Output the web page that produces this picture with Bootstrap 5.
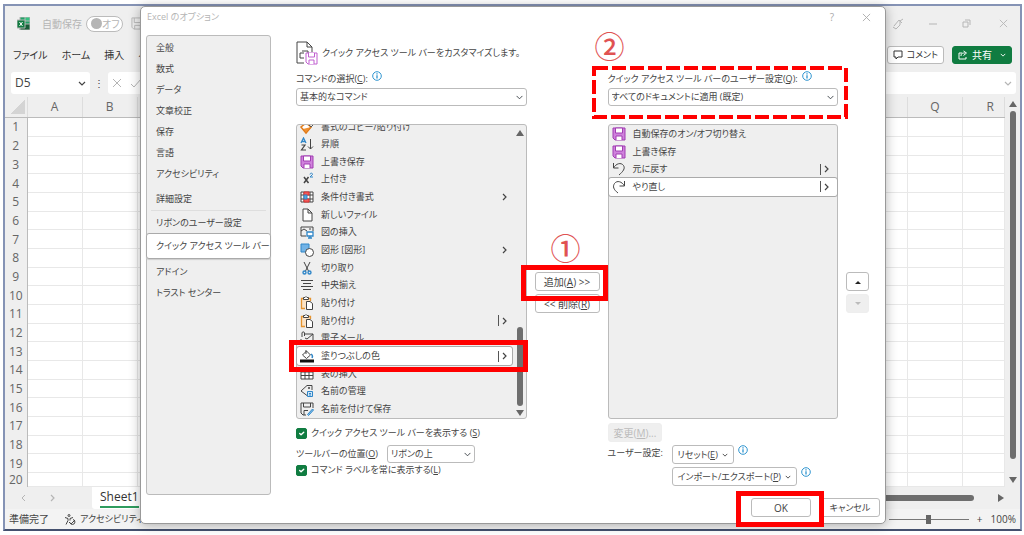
<!DOCTYPE html>
<html lang="ja">
<head>
<meta charset="utf-8">
<meta name="viewport" content="width=device-width, initial-scale=1">
<title>Excel のオプション</title>
<link href="https://cdn.jsdelivr.net/npm/bootstrap@5.3.0/dist/css/bootstrap.min.css" rel="stylesheet">
<style>
body{font-family:"Open Sans","Noto Sans CJK JP",sans-serif;font-feature-settings:"palt";font-size:10px;line-height:16px;color:#444;background:#fff;min-height:100vh;padding:4px 2px 4px 3px;overflow:hidden}
svg{display:block;flex:none;fill:none;stroke:currentColor}
button,select,input{font-feature-settings:inherit}
.app{flex:1;border:2px solid #8593b5;border-bottom-color:#44506e;background:#efefef;min-width:0}
.faded{color:#b5b5b5}
.toggle-pill{width:37px;height:16px;border:1px solid #bbb;border-radius:8px;background:#fff;white-space:nowrap;line-height:14px}
.toggle-pill i{width:11px;height:11px;border-radius:50%;background:#b5b5b5;flex:none}
.title-row{height:35px}
.tab-row{height:28px;gap:14px}
.tab-row a{color:#333;text-decoration:none;white-space:nowrap}
.cmd-btn{height:18px;border:1px solid #bbb;border-radius:3px;background:#fff;color:#333;font-size:10px;line-height:14px;padding:0 5px;white-space:nowrap}
.share-btn{background:#107c41;border-color:#107c41;color:#fff}
.formula-row{height:28px;padding:0 4px 0 6px}
.field-box{background:#fff;border-radius:3px;height:22px;font-size:12px}
.sheet-wrap{flex:1;min-height:0}
.sheet-clip{flex:1;min-width:0;overflow:hidden}
.sheet-table{table-layout:fixed;width:100%;height:100%;border-collapse:collapse;background:#fff;font-size:12px;line-height:13px}
.sheet-table th{background:#efefef;font-weight:400;text-align:center;color:#666;padding:0;border-right:1px solid #ddd}
.sheet-table td{border:1px solid #e8e8e8;padding:0}
.sheet-table thead th{height:20px;border-bottom:1px solid #bbb}
.sheet-table thead th:last-child{width:42px;text-align:right;padding-right:10px}
.sheet-table tbody th{border-right:1px solid #bbb}
.vbar{width:15px}
.corner{display:block;margin:0 2px 0 auto;width:15px;height:14px;background:linear-gradient(135deg,transparent 50%,#d4d4d4 50%)}
.thumb{background:#6e6e6e;border-radius:3px}
.tri-up,.tri-down,.tri-right{width:0;height:0;border:4px solid transparent}
.tri-up{border-top:0;border-bottom:6px solid #666}
.tri-down{border-bottom:0;border-top:6px solid #666}
.tri-right{border-right:0;border-left:6px solid #666}
.sheetbar{height:22px}
.sheet-tab{background:#fff;font-size:12px;padding:0 8px;height:22px;border-radius:0 0 3px 3px;color:#333;border:0;margin-left:37px}
.sheet-tab span{display:block;border-bottom:2px solid #2f9c5e;line-height:18px}
.statusbar{height:20px;background:#f3f3f3}
.zoom-range{width:80px;height:10px;appearance:none;background:linear-gradient(#777,#777) center/100% 1px no-repeat}
.zoom-range::-webkit-slider-thumb{appearance:none;width:5px;height:9px;background:#666}
.dialog,.dialog .dd,.fine{font-size:9px}
.dialog{left:135px;right:134px;top:0;bottom:5px;background:#fff;border:1px solid #999;border-radius:5px;box-shadow:0 1px 12px rgba(0,0,0,.3)}
.dialog-title{height:28px;padding:2px 14px 0 6px}
.plain-btn{border:0;background:none;padding:0;color:#aaa;font-size:10px}
.side{width:125px;margin-left:5px;padding-top:1px;background:#efefef;border:1px solid #bbb;border-radius:3px}
.side a{display:block;color:#444;text-decoration:none;padding:0 9px;line-height:21px;height:21px;white-space:nowrap}
.side a.picked{background:#fff;border:1px solid #aaa;border-radius:3px;height:26px;line-height:24px;margin:0 -1px 2px;box-shadow:0 1px 1px #ccc}
.side hr{margin:1px 4px;border-color:#aaa}
.main{padding:0 16px 0 25px}
.heading-row{height:36px;gap:4px}
.mid{width:81px}
.ends{width:31px;padding-left:8px}
.stack{gap:3px;padding-top:201px}
.lab{height:17px;white-space:nowrap}
.dd{height:18px;min-height:0;padding:0 16px 0 3px;line-height:16px;border:1px solid #bbb;border-radius:3px;color:#444;background-color:#fff;background-size:7px;background-position:right 3px center}
.dd-small{width:88px}
.cmds{display:grid;grid-template-rows:10px repeat(16,minmax(0,1fr));flex:1;min-height:0;margin:18px 0 0;padding:0;list-style:none;background:#efefef;border:1px solid #bbb;border-radius:3px;position:relative}
.cmds.later{grid-template-rows:repeat(16,minmax(0,1fr)) 10px}
.cmds li{display:flex;align-items:center;gap:7px;padding:0 8px 0 3px;white-space:nowrap}
.cmds li.cut{overflow:hidden;align-items:flex-end}
.cmds.scrolls li{margin-right:14px;padding-right:5px}
.cmds li.on{background:#fff;outline:1px solid #aaa;border-radius:2px;position:relative}
.more{margin-left:auto;display:flex;align-items:center;gap:3px}
.more.split::before{content:"";width:1px;height:11px;background:#555}
.list-bar{position:absolute;right:3px;top:4px;bottom:3px;width:8px}
.list-bar .thumb{width:6px;height:79px}
.below{height:76px;padding-top:4px}
.opt{height:16px;gap:4px;margin-top:2px;white-space:nowrap}
.opt-mid{gap:9px;margin:5px 0 0}
.opt-end{margin-top:0}
.chk{width:11px;height:11px;margin:0;border-radius:2px!important;flex:none}
.chk:checked{background-color:#107c41;border-color:#107c41}
.btn-s{height:19px;border:1px solid #bbb;border-radius:3px;background:#fff;color:#444;font-size:10px;line-height:16px;padding:0 5px;white-space:nowrap}
.btn-s.fine{font-size:9px}
.btn-s:disabled{background:#efefef;border-color:#eee;color:#bbb}
.wide{width:65px}
.usual{width:60px}
.arrow-btn{width:23px;padding:0}
.info{color:#2f95d0}
.user-lab{width:64px}
.foot{height:28px;padding:3px 5px 0 0;gap:9px}
.ring{position:absolute;border:5px solid #f00;pointer-events:none;z-index:3}
.ring-row{inset:-7px -16px -7px -8px}
.ring-add{inset:-7px -8px -10px -14px}
.ring-ok{inset:-7px -13px -10px -15px}
.dash-box{position:absolute;left:-16px;top:-5px;width:calc(100% + 27px);height:53px;pointer-events:none;overflow:visible}
.num{position:absolute;color:#e05252;font-family:"Noto Sans CJK JP",sans-serif;font-size:30px;line-height:30px;font-weight:500}
.num-one{left:16px;top:-40px}
.num-two{left:-13px;top:-41px}
</style>
</head>
<body class="d-flex">
<svg width="0" height="0" class="position-absolute">
<symbol id="save" viewBox="0 0 14 14"><path d="M1 1h12v12H3l-2-2z" fill="#cf82dc" stroke="#a13db2"/><path d="M3.500 1v5h7V1z" fill="#fff" stroke="#a13db2"/><path d="M4 13V9h6v4" fill="#fff" stroke="#a13db2"/></symbol>
<symbol id="brush" viewBox="0 0 14 14"><path d="M1 6l5-4 5 4-5 6z" fill="#fff" stroke="#e07b1a" stroke-width="1.500"/><path d="M3 8l3 4 5-6" fill="#f09030" stroke="#e07b1a"/><path d="M8 3l3 3 2-2" stroke="#555"/></symbol>
<symbol id="sort" viewBox="0 0 14 14"><path d="M1 6l2.500-5L6 6M2 4.500h3" stroke="#2f86c8" stroke-width="1.300"/><path d="M1.500 8H5l-3.500 5H6" stroke-width="1.200"/><path d="M10.500 2v10M8 9.500l2.500 2.500L13 9.500"/></symbol>
<symbol id="sup" viewBox="0 0 14 14"><path d="M4 5l4.500 6M8.500 5L4 11" stroke-width="1.500"/><path d="M10 2.500c0-2 3-1.500 2.500 0L10 5h3" stroke="#2f86c8"/></symbol>
<symbol id="cond" viewBox="0 0 14 14"><path d="M1 2h12v10H1z" fill="#fff"/><path d="M1 5h12M1 9h12M4 2v10M10 2v10"/><path d="M4 2h5v3H4zM4 9h5v3H4z" fill="#f25c5c" stroke="#d33"/><path d="M4 5h3v4H4z" fill="#5ba6e0" stroke="#2f86c8"/></symbol>
<symbol id="page" viewBox="0 0 14 14"><path d="M3 1h5l4 4v8H3zM8 1v4h4" fill="#fff"/></symbol>
<symbol id="pic" viewBox="0 0 14 14"><path d="M6 11H1V2h12v4M1 6l3-2 3 2M9 4h2"/><path d="M7 7h6v4H7zM10 11v2M8 13h4" fill="#fff" stroke="#2f86c8" stroke-width="1.300"/></symbol>
<symbol id="shape" viewBox="0 0 14 14"><path d="M1 1h8v8H1z" fill="#72b3e6" stroke="#2f86c8"/><circle cx="9.500" cy="9.500" r="4" fill="#fff"/></symbol>
<symbol id="cutting" viewBox="0 0 14 14"><path d="M4 1l4.500 9M10 1L5.500 10"/><circle cx="4.500" cy="11.500" r="1.500" stroke="#2f86c8" stroke-width="1.400"/><circle cx="9.500" cy="11.500" r="1.500" stroke="#2f86c8" stroke-width="1.400"/></symbol>
<symbol id="center" viewBox="0 0 14 14"><path d="M1 2.500h12M3 5.500h8M1 8.500h12M3 11.500h8"/></symbol>
<symbol id="paste" viewBox="0 0 14 14"><path d="M5 12.500H1.500v-10h9V5" fill="#fbe3c6" stroke="#e6942f" stroke-width="1.300"/><path d="M3.500 3.500v-2h1.500l1-1 1 1h1.500v2z" fill="#fff"/><path d="M6.500 5.500H10l2.500 2v6h-6z" fill="#fff"/></symbol>
<symbol id="mail" viewBox="0 0 14 14"><path d="M5 3h8v9H1V8M13 3L7 8 5 7"/><path d="M2 6V2c0-1.500 2.500-1.500 2.500 0v3"/></symbol>
<symbol id="fillc" viewBox="0 0 14 14"><path d="M2.500 6l4-4 4 4-4 3.500zM6 1v4" fill="#fff"/><path d="M11 5c1.500 1 1.500 3 1 4" stroke="#2f86c8" stroke-width="1.500"/><path d="M0 12h14" stroke="#111" stroke-width="3"/></symbol>
<symbol id="grid" viewBox="0 0 14 14"><path d="M1 2h12v10H1zM1 5h12M1 8.500h12M5 2v10M9 2v10M1 3.500h12" fill="#fff"/></symbol>
<symbol id="tagn" viewBox="0 0 14 14"><path d="M7 11.500L1 7l6-5.500h5V6"/><circle cx="9" cy="4" r=".7"/><path d="M7.500 7.500h5v5h-5zM9 9.500h2M9 11h2" fill="#cfe6f8" stroke="#2f86c8"/></symbol>
<symbol id="saveas" viewBox="0 0 14 14"><path d="M6 13H3l-2-2V1h12v5M3.500 1v4h7V1M4 13V8.500h4"/><path d="M7.500 12.500L12.500 7l1 1-5 5.500z" fill="#8ac6ef" stroke="#2f86c8"/></symbol>
<symbol id="undo" viewBox="0 0 14 14"><path d="M1.500 1v5h5M1.500 6C4 1.500 9 0 11.500 3.500c2 3-.500 6-4.500 9.500"/></symbol>
<symbol id="redo" viewBox="0 0 14 14"><path d="M12.500 1v5h-5M12.500 6C10 1.500 5 0 2.500 3.500c-2 3-1 6 3.500 9.500"/></symbol>
<symbol id="chev" viewBox="0 0 5 8"><path d="M1 1l3 3-3 3" stroke-width="1.200"/></symbol>
<symbol id="down" viewBox="0 0 8 5"><path d="M1 1l3 3 3-3" stroke-width="1.200"/></symbol>
<symbol id="cross" viewBox="0 0 10 10"><path d="M1 1l8 8M9 1L1 9"/></symbol>
<symbol id="inf" viewBox="0 0 10 10"><circle cx="5" cy="5" r="4.300"/><path d="M5 4.300v3.200M5 2.300v1.200" stroke-width="1.300"/></symbol>
</svg>

<div class="app d-flex flex-column position-relative">
  <header class="title-row d-flex align-items-center faded ps-2">
    <svg class="ms-1" width="13" height="13" viewBox="0 0 13 13" stroke="none"><path d="M3 0h10v13H3z" fill="#21a366"/><path d="M8 0h5v4H8z" fill="#33c481"/><path d="M3 7h10v6H3z" fill="#185c37"/><path d="M0 3h8v8H0z" fill="#107c41"/><path d="M2.500 5l3 4M5.500 5l-3 4" stroke="#fff"/></svg>
    <span class="ms-2 ps-1 me-1">自動保存</span>
    <span class="toggle-pill d-flex align-items-center justify-content-between ps-1 pe-1"><i></i><span>オフ</span></span>
    <svg class="ms-2" width="13" height="13" viewBox="0 0 14 14"><path d="M1 1h12v12H3l-2-2zM3.500 1v5h7V1M4 13V9h6v4"/></svg>
    <span class="ms-auto d-flex align-items-center me-2 pe-1">
      <svg width="12" height="12" viewBox="0 0 12 12"><path d="M1 9l3 2 4-4V3l3-2M2 8l5-6 3 3"/></svg>
      <svg class="ms-4" width="10" height="10" viewBox="0 0 10 10"><path d="M1 5h8"/></svg>
      <svg class="ms-4 me-4" width="9" height="9" viewBox="0 0 9 9"><path d="M1 3h5v5H1zM3 1h5v5"/></svg>
      <svg class="ms-1" width="9" height="9"><use href="#cross"/></svg>
    </span>
  </header>
  <nav class="tab-row d-flex align-items-center ps-2 pe-2">
    <a href="#">ファイル</a><a href="#">ホーム</a><a href="#">挿入</a><a href="#">ページ レイアウト</a>
    <span class="ms-auto d-flex gap-2">
    <button class="cmd-btn fine d-flex align-items-center gap-1"><svg width="10" height="10" viewBox="0 0 10 10"><path d="M1 1h8v6H5L3 9V7H1z"/></svg>コメント</button>
    <button class="cmd-btn share-btn d-flex align-items-center gap-1"><svg width="10" height="10" viewBox="0 0 10 10"><path d="M4 3H1v6h7V7M3 6c0-3 2-3 4-3M5.500 1l3 2-3 2.500"/></svg>共有<svg class="ms-1" width="6" height="4"><use href="#down"/></svg></button>
    </span>
  </nav>
  <div class="formula-row d-flex align-items-center">
    <div class="field-box d-flex align-items-center justify-content-between px-1" style="width:79px">D5<svg width="8" height="5"><use href="#down"/></svg></div>
    <span class="px-1">⋮</span>
    <div class="field-box flex-grow-1 d-flex align-items-center justify-content-between px-1 faded"><span class="d-flex gap-2"><svg width="10" height="10"><use href="#cross"/></svg><svg width="12" height="10" viewBox="0 0 12 10"><path d="M1 6l3 3 7-8"/></svg></span><svg width="8" height="5"><use href="#down"/></svg></div>
  </div>
  <div class="sheet-wrap d-flex">
    <div class="sheet-clip"><table class="sheet-table"><thead></thead><tbody></tbody></table></div>
    <div class="vbar d-flex flex-column align-items-center pt-1 pb-1"><i class="tri-up"></i><i class="thumb mt-1" style="width:6px;height:91%"></i><i class="tri-down mt-auto"></i></div>
  </div>
  <div class="sheetbar d-flex align-items-center">
    <svg class="faded ms-3" width="5" height="8" viewBox="0 0 5 8"><path d="M4 1L1 4l3 3"/></svg>
    <svg class="faded ms-4" width="5" height="8"><use href="#chev"/></svg>
    <button class="sheet-tab"><span>Sheet1</span></button>
    <i class="thumb ms-auto" style="width:30%;height:6px"></i><i class="tri-right ms-4 me-3"></i>
  </div>
  <footer class="statusbar d-flex align-items-center ps-1">
    <span>準備完了</span>
    <svg class="ms-3 me-1" width="11" height="11" viewBox="0 0 11 11"><circle cx="4" cy="1.500" r="1"/><path d="M0 3.500l3 1v2l-2 4M8 3.500l-3 1v2M8 5.500a2.500 2.500 0 1 1-3 3M4 8l2 2 4-4"/></svg>
    <span class="fine">アクセシビリティ: 問題ありません</span>
    <input class="zoom-range ms-auto" type="range" aria-label="ズーム"><span class="mx-2">+</span><span class="me-1">100%</span>
  </footer>

  <section class="dialog position-absolute d-flex flex-column">
    <div class="dialog-title d-flex align-items-start faded"><span>Excel のオプション</span><button class="plain-btn ms-auto me-4">?</button><button class="plain-btn ms-1 mt-1" aria-label="閉じる"><svg width="9" height="9"><use href="#cross"/></svg></button></div>
    <div class="d-flex flex-grow-1" style="min-height:0">
      <nav class="side">
        <a href="#">全般</a><a href="#">数式</a><a href="#">データ</a><a href="#">文章校正</a><a href="#">保存</a><a href="#">言語</a><a href="#">アクセシビリティ</a><a href="#" class="mt-1">詳細設定</a><hr>
        <a href="#">リボンのユーザー設定</a><a href="#" class="picked">クイック アクセス ツール バー</a><a href="#">アドイン</a><a href="#">トラスト センター</a>
      </nav>
      <div class="main flex-grow-1 d-flex flex-column">
        <div class="heading-row d-flex align-items-center">
          <svg width="22" height="24" viewBox="0 0 22 24"><path d="M8 22H1V1h10l5 5v5M11 1v5h5M4 17v-5h4M6 10h6v3M4 17h4"/><g stroke="#c05fd0" fill="#fff"><path d="M10 12h11v11H12l-2-2z"/><path d="M12.500 12v4h6v-4M13 23v-4h5v4"/></g></svg>
          <span>クイック アクセス ツール バーをカスタマイズします。</span>
        </div>
        <div class="d-flex flex-grow-1" style="min-height:0">
          <div class="d-flex flex-column" style="flex:1 1 0;min-width:0">
            <label class="lab d-flex" for="src"><span>コマンドの選択(<u>C</u>):</span><svg class="info ms-1" width="10" height="10"><use href="#inf"/></svg></label>
            <select id="src" class="form-select dd"><option>基本的なコマンド</option></select>
            <div class="d-flex flex-column flex-grow-1 position-relative" style="min-height:0">
            <ul class="cmds scrolls">
              <li class="cut"><svg width="14" height="14"><use href="#brush"/></svg>書式のコピー/貼り付け</li>
              <li><svg width="14" height="14"><use href="#sort"/></svg>昇順</li>
              <li><svg width="14" height="14"><use href="#save"/></svg>上書き保存</li>
              <li><svg width="14" height="14"><use href="#sup"/></svg>上付き</li>
              <li><svg width="14" height="14"><use href="#cond"/></svg>条件付き書式<span class="more"><svg width="5" height="8"><use href="#chev"/></svg></span></li>
              <li><svg width="14" height="14"><use href="#page"/></svg>新しいファイル</li>
              <li><svg width="14" height="14"><use href="#pic"/></svg>図の挿入</li>
              <li><svg width="14" height="14"><use href="#shape"/></svg>図形 [図形]<span class="more"><svg width="5" height="8"><use href="#chev"/></svg></span></li>
              <li><svg width="14" height="14"><use href="#cutting"/></svg>切り取り</li>
              <li><svg width="14" height="14"><use href="#center"/></svg>中央揃え</li>
              <li><svg width="14" height="14"><use href="#paste"/></svg>貼り付け</li>
              <li><svg width="14" height="14"><use href="#paste"/></svg>貼り付け<span class="more split"><svg width="5" height="8"><use href="#chev"/></svg></span></li>
              <li><svg width="14" height="14"><use href="#mail"/></svg>電子メール</li>
              <li class="on"><svg width="14" height="14"><use href="#fillc"/></svg>塗りつぶしの色<span class="more split"><svg width="5" height="8"><use href="#chev"/></svg></span><i class="ring ring-row"></i></li>
              <li><svg width="14" height="14"><use href="#grid"/></svg>表の挿入</li>
              <li><svg width="14" height="14"><use href="#tagn"/></svg>名前の管理</li>
              <li><svg width="14" height="14"><use href="#saveas"/></svg>名前を付けて保存</li>
            </ul>
            <div class="list-bar d-flex flex-column align-items-center mt-3 pt-1"><i class="tri-up"></i><i class="thumb mt-auto"></i><i class="tri-down mt-1"></i></div>
            </div>
            <div class="below">
              <label class="opt d-flex align-items-center"><input type="checkbox" class="form-check-input chk" checked><span>クイック アクセス ツール バーを表示する (<u>S</u>)</span></label>
              <div class="opt opt-mid d-flex align-items-center"><label for="pos">ツールバーの位置(<u>O</u>)</label><select id="pos" class="form-select dd dd-small"><option>リボンの上</option></select></div>
              <label class="opt opt-end d-flex align-items-center"><input type="checkbox" class="form-check-input chk" checked><span>コマンド ラベルを常に表示する(<u>L</u>)</span></label>
            </div>
          </div>
          <div class="mid stack d-flex flex-column align-items-center">
            <div class="position-relative d-flex"><button class="btn-s wide">追加(<u>A</u>) &gt;&gt;</button><i class="ring ring-add"></i><span class="num num-one">①</span></div>
            <button class="btn-s wide">&lt;&lt; 削除(<u>R</u>)</button>
          </div>
          <div class="d-flex flex-column position-relative" style="flex:1 1 0;min-width:0">
            <svg class="dash-box"><rect x="2" y="2" width="252" height="49" stroke="#f00" stroke-width="4" stroke-dasharray="14 4"/></svg>
            <span class="num num-two">②</span>
            <label class="lab d-flex" for="tgt"><span>クイック アクセス ツール バーのユーザー設定(<u>Q</u>):</span><svg class="info ms-1" width="10" height="10"><use href="#inf"/></svg></label>
            <select id="tgt" class="form-select dd"><option>すべてのドキュメントに適用 (既定)</option></select>
            <ul class="cmds later">
              <li><svg width="14" height="14"><use href="#save"/></svg>自動保存のオン/オフ切り替え</li>
              <li><svg width="14" height="14"><use href="#save"/></svg>上書き保存</li>
              <li><svg width="14" height="14"><use href="#undo"/></svg>元に戻す<span class="more split"><svg width="5" height="8"><use href="#chev"/></svg></span></li>
              <li class="on"><svg width="14" height="14"><use href="#redo"/></svg>やり直し<span class="more split"><svg width="5" height="8"><use href="#chev"/></svg></span></li>
            </ul>
            <div class="below d-flex flex-column align-items-start">
              <button class="btn-s" disabled>変更(<u>M</u>)...</button>
              <div class="d-flex" style="margin-top:3px"><span class="user-lab">ユーザー設定:</span>
                <div>
                  <div class="d-flex"><button class="btn-s fine d-flex align-items-center gap-1"><span>リセット(<u>E</u>)</span><svg width="6" height="4"><use href="#down"/></svg></button><svg class="info ms-1" width="10" height="10"><use href="#inf"/></svg></div>
                  <div class="d-flex" style="margin-top:3px"><button class="btn-s fine d-flex align-items-center gap-1"><span>インポート/エクスポート(<u>P</u>)</span><svg width="6" height="4"><use href="#down"/></svg></button><svg class="info ms-1" width="10" height="10"><use href="#inf"/></svg></div>
                </div>
              </div>
            </div>
          </div>
          <div class="ends stack d-flex flex-column"><button class="btn-s arrow-btn d-flex align-items-center justify-content-center" aria-label="上へ"><svg width="6" height="4" viewBox="0 0 6 4"><path d="M0 4l3-3 3 3z" fill="#222" stroke="none"/></svg></button><button class="btn-s arrow-btn d-flex align-items-center justify-content-center" disabled aria-label="下へ"><svg width="6" height="4" viewBox="0 0 6 4"><path d="M0 0l3 3 3-3z" fill="#bbb" stroke="none"/></svg></button></div>
        </div>
      </div>
    </div>
    <div class="foot d-flex justify-content-end align-items-start"><div class="position-relative d-flex"><button class="btn-s usual">OK</button><i class="ring ring-ok"></i></div><button class="btn-s usual fine">キャンセル</button></div>
  </section>
</div>
<script>
const cols = [...'ABCDEFGHIJKLMNOPQR'];
document.querySelector('.sheet-table thead').innerHTML =
  '<tr><th style="width:22px"><i class="corner"></i></th>' + cols.map(c => `<th>${c}</th>`).join('') + '</tr>';
document.querySelector('.sheet-table tbody').innerHTML =
  Array.from({length: 20}, (_, i) => `<tr${i === 19 ? ' style="height:14px"' : ''}><th>${i + 1}</th>${'<td></td>'.repeat(18)}</tr>`).join('');
</script>
<script src="https://cdn.jsdelivr.net/npm/bootstrap@5.3.0/dist/js/bootstrap.bundle.min.js"></script>
</body>
</html>
